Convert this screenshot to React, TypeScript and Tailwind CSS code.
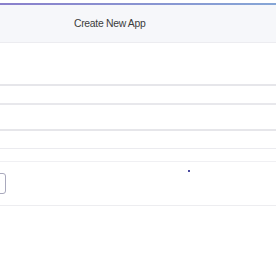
import React from "react";

export default function App() {
  return (
    <div className="w-[276px] h-[260px] bg-white overflow-hidden" style={{ fontFamily: '"Liberation Sans", Arial, sans-serif' }}>
      <div className="h-[3px] bg-white" />
      <div className="h-[2px] bg-gradient-to-r from-[#8a80cc] to-[#86a6d6]" />
      <div className="h-[38px] bg-[#f6f7fa] border-b border-[#ececf0] flex items-center pl-[74px] pt-[1px]">
        <span className="text-[10.4px] tracking-[-0.3px] text-[#3c3c3c] leading-none">Create New App</span>
      </div>
      <div className="h-[43px] border-b-2 border-[#e6e6ea]" />
      <div className="h-[19px] border-b-2 border-[#e8e8ec]" />
      <div className="h-[26px] border-b-2 border-[#e6e6ea]" />
      <div className="h-[18px] border-b border-[#ebebef]" />
      <div className="h-[13px] border-b border-[#f0f0f3]" />
      <div className="relative h-[44px] pt-[11px] border-b border-[#ededf0]">
        <div className="ml-[-20px] w-[26px] h-[21px] border border-[#a9a9bd] rounded-[3px]" />
        <div className="absolute left-[188px] top-[8px] w-[2px] h-[2px] bg-[#4a4aa0]" />
      </div>
    </div>
  );
}
